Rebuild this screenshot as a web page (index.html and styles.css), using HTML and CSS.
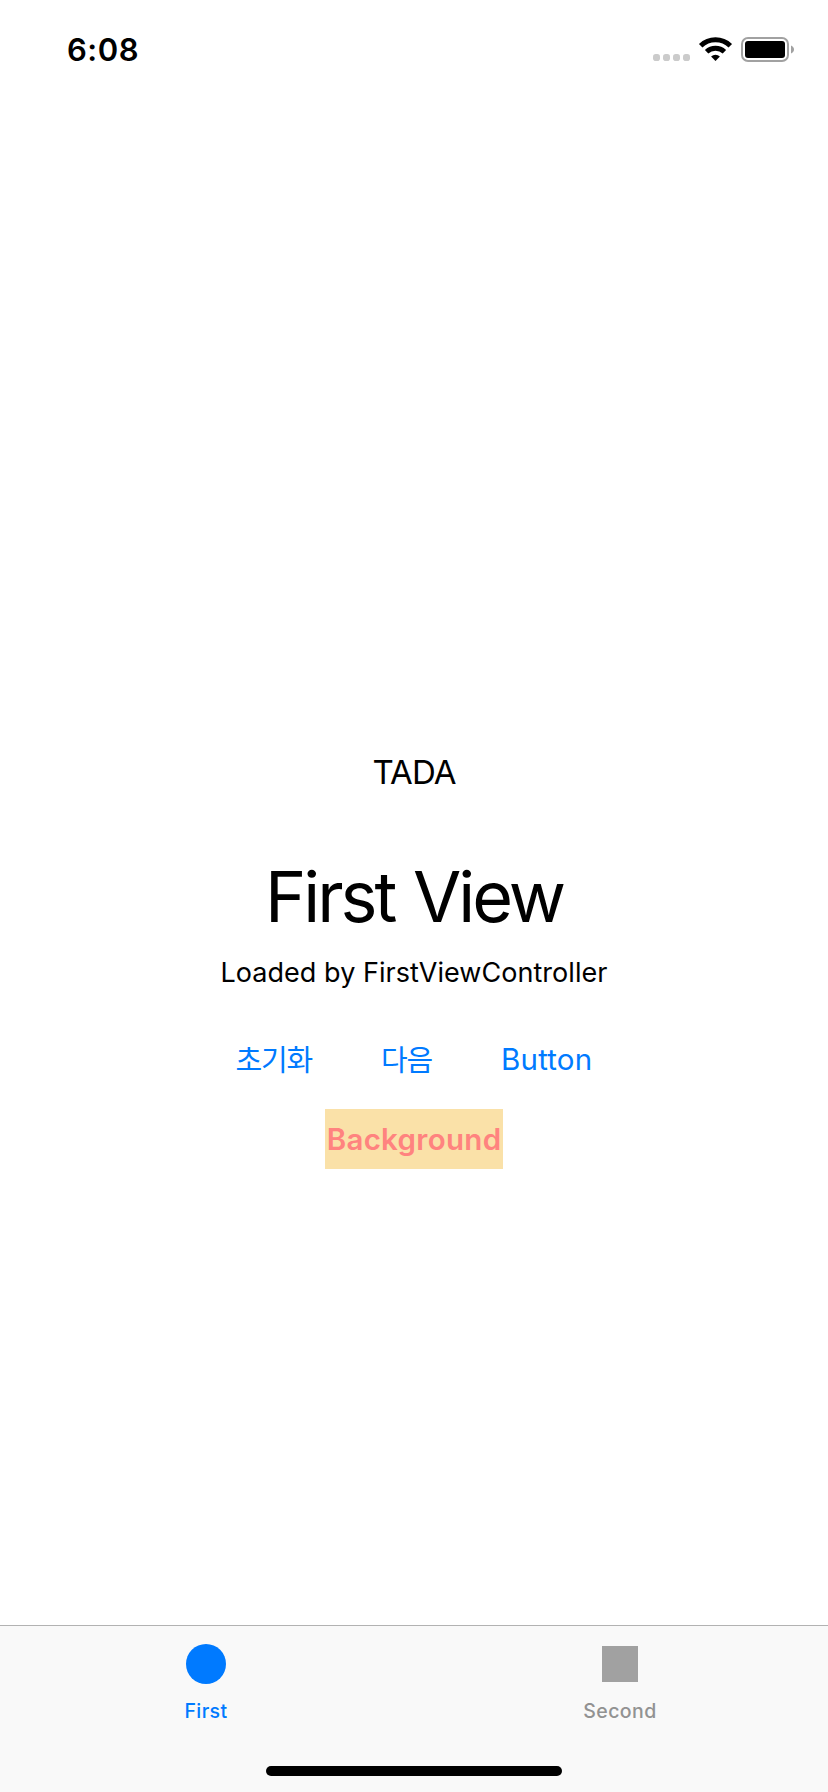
FILE: index.html
```html
<!DOCTYPE html>
<html lang="ko">
<head>
<meta charset="utf-8">
<title>First View</title>
<link rel="stylesheet" href="styles.css">
</head>
<body>
<div class="screen">
  <header class="status-bar">
    <span class="time">6:08</span>
    <svg class="status-icons" width="142" height="26" viewBox="0 0 142 26">
      <g fill="#cbcbcb">
        <rect x="0" y="18" width="7" height="7" rx="2.8"/>
        <rect x="10" y="18" width="7" height="7" rx="2.8"/>
        <rect x="20" y="18" width="7" height="7" rx="2.8"/>
        <rect x="30" y="18" width="7" height="7" rx="2.8"/>
      </g>
      <g fill="none" stroke="#000" stroke-width="5">
        <path d="M47.7 9.7A21.4 21.4 0 0 1 77.3 9.7"/>
        <path d="M53.6 15.7A13 13 0 0 1 71.4 15.7"/>
      </g>
      <path d="M62.5 25l-4.4-4.4a6.3 6.3 0 0 1 8.8 0z"/>
      <rect x="89" y="2" width="46" height="23" rx="6" fill="none" stroke="#a1a1a1" stroke-width="2"/>
      <rect x="92" y="5" width="40" height="17" rx="3"/>
      <path d="M138 9.5c4 1.4 4 6.6 0 8z" fill="#a1a1a1"/>
    </svg>
  </header>
  <main class="content">
    <p class="label">TADA</p>
    <h1 class="title">First View</h1>
    <p class="subtitle">Loaded by FirstViewController</p>
    <div class="actions">
      <button class="link korean">초기화</button>
      <button class="link korean">다음</button>
      <button class="link">Button</button>
    </div>
    <button class="background-button">Background</button>
  </main>
  <nav class="tab-bar">
    <div class="tabs">
      <a class="tab active"><span class="icon circle"></span><span class="tab-label">First</span></a>
      <a class="tab"><span class="icon square"></span><span class="tab-label">Second</span></a>
    </div>
    <div class="home-indicator"></div>
  </nav>
</div>
</body>
</html>
```
FILE: styles.css
```css
* { box-sizing: border-box; }
body { margin: 0; background: #fff; color: #000; font-family: Inter, "Noto Sans CJK KR", sans-serif; }
p, h1 { margin: 0; font-weight: 400; white-space: nowrap; }
button { border: 0; margin: 0; padding: 0; background: none; font: inherit; white-space: nowrap; }
.screen { width: 828px; height: 1792px; display: flex; flex-direction: column; }
.status-bar { height: 88px; padding: 30px 33px 0 67px; display: flex; justify-content: space-between; align-items: flex-start; }
.time { font-size: 31px; line-height: 40px; font-weight: 600; letter-spacing: 0.5px; }
.status-icons { margin-top: 6px; }
.content { flex: 1; padding-top: 664px; display: flex; flex-direction: column; align-items: center; }
.label { font-size: 33px; line-height: 40px; letter-spacing: -0.9px; }
.title { margin-top: 62px; font-size: 70px; line-height: 86px; letter-spacing: -3px; word-spacing: 2px; }
.subtitle { margin-top: 16px; font-size: 27px; line-height: 34px; letter-spacing: 0.05px; }
.actions { margin-top: 39px; display: flex; gap: 69px; }
.link { height: 60px; font-size: 29.5px; line-height: 61px; letter-spacing: 0.2px; color: #007aff; }
.korean { font-family: "Noto Sans CJK KR", sans-serif; font-size: 29px; line-height: 58px; letter-spacing: -1.2px; display: flex; }
.background-button { margin-top: 20px; width: 178px; height: 60px; background: #fae1a8; color: #ff837f; font-size: 29.5px; line-height: 61px; font-weight: 600; letter-spacing: 0.3px; }
.tab-bar { height: 167px; border-top: 1px solid #b2b2b2; background: #f9f9f9; }
.tabs { height: 140px; display: flex; gap: 2px; padding-top: 18px; }
.tab { width: 412px; display: flex; flex-direction: column; align-items: center; color: #929292; }
.tab.active { color: #007aff; }
.icon { display: block; }
.circle { width: 40px; height: 40px; border-radius: 50%; background: #007aff; }
.square { width: 36px; height: 36px; margin: 2px 0; background: #a1a1a1; }
.tab-label { margin-top: 15px; font-size: 19.5px; line-height: 24px; font-weight: 500; letter-spacing: 0.4px; }
.home-indicator { width: 296px; height: 10px; margin: 0 auto; border-radius: 5px; background: #000; }
```
